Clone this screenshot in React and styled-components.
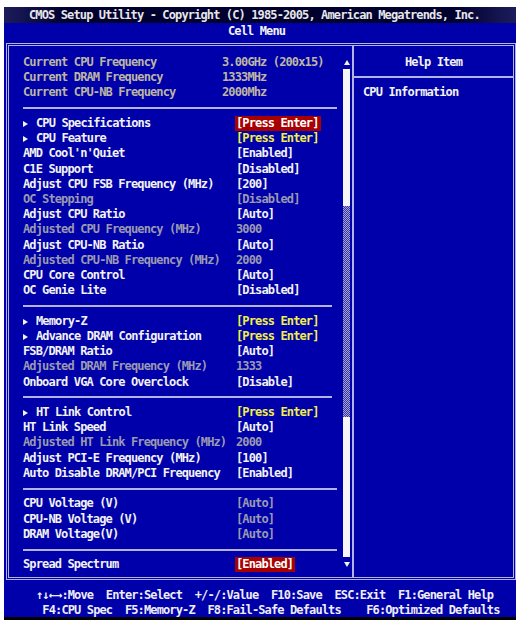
import React from 'react';
import styled, { createGlobalStyle, css } from 'styled-components';

const Global = createGlobalStyle`
  html, body { margin: 0; padding: 0; background: #ffffff; }
  body { font-family: "DejaVu Sans Mono", "Liberation Mono", monospace; }
`;

const LINE = '#b4b4e4';

const Screen = styled.div`
  width: 512px;
  margin: 7px 0 0 4px;
  background: #0000aa;
  border-bottom: 3px solid #000;
  font: bold 12px/15.2px "DejaVu Sans Mono", "Liberation Mono", monospace;
  letter-spacing: -0.875px;
  white-space: pre;
  color: #f2f2f2;
`;

const TitleBar = styled.div`
  height: 16px;
  line-height: 17px;
  padding-left: 25px;
  color: #e6e6e6;
  background: linear-gradient(90deg, #1c1c5c 0%, #00002e 12%, #00002e 88%, #1c1c5c 100%);
`;

const SubTitle = styled.div`
  height: 20px;
  line-height: 17px;
  padding-left: 224px;
  color: #f2f2f2;
`;

const Frame = styled.div`
  margin-left: 2px;
  width: 510px;
  height: 537px;
  box-sizing: border-box;
  border: 3px double ${LINE};
  display: grid;
  grid-template-columns: 343px 2px 159px;
`;

const LeftPanel = styled.div`
  display: flex;
  min-height: 0;
`;

const Rows = styled.div`
  flex: 1;
  padding: 9px 0 0 14px;
`;

const Row = styled.div`
  display: grid;
  grid-template-columns: ${p => (p.$info ? '199px' : '213px')} auto;
  height: 15.22px;
  align-items: center;
`;

const labelColors = {
  normal: '#f2f2f2',
  info: '#bcb6a2',
  dim: '#9a9ab0',
};

const Label = styled.span`
  color: ${p => labelColors[p.$kind || 'normal']};
`;

const valueColors = {
  normal: '#f2f2f2',
  info: '#bcb6a2',
  dim: '#9a9ab0',
  sub: '#f0f048',
  selected: '#ffffff',
};

const Value = styled.span`
  color: ${p => valueColors[p.$kind || 'normal']};
  justify-self: start;
  ${p =>
    p.$kind === 'selected' &&
    css`
      background: #a80000;
      margin-left: -1px;
      padding: 0 2px 0 1px;
      height: 15px;
      line-height: 15px;
    `}
`;

const Arrow = styled.span`
  display: inline-block;
  width: 0;
  height: 0;
  border-left: 5px solid #f2f2f2;
  border-top: 3px solid transparent;
  border-bottom: 3px solid transparent;
  margin-right: 8px;
`;

const SepRow = styled.div`
  height: 15.22px;
  display: flex;
  align-items: center;
  padding-right: ${p => (p.$short ? '11px' : '6px')};
`;

const SepLine = styled.div`
  flex: 1;
  height: 2px;
  background: ${LINE};
`;

const ScrollBar = styled.div`
  width: 7px;
  margin-right: 2px;
  padding-top: 13px;
  display: flex;
  flex-direction: column;
  align-items: center;
`;

const UpTri = styled.div`
  width: 0;
  height: 0;
  margin-top: 1px;
  border-left: 3px solid transparent;
  border-right: 3px solid transparent;
  border-bottom: 5px solid #f2f2f2;
`;

const DownTri = styled.div`
  width: 0;
  height: 0;
  margin-top: 5px;
  border-left: 3px solid transparent;
  border-right: 3px solid transparent;
  border-top: 5px solid #f2f2f2;
`;

const Track = styled.div`
  margin-top: 4px;
  width: 7px;
  height: ${p => p.$h}px;
  ${p =>
    p.$dither
      ? css`
          background: repeating-conic-gradient(#a4a4d4 0% 25%, #3434a8 0% 50%) 0 0 / 2px 2px;
        `
      : css`
          background: #f6f6f6;
        `}
  & + & {
    margin-top: 0;
  }
`;

const Divider = styled.div`
  background: ${LINE};
`;

const RightPanel = styled.div`
  display: flex;
  flex-direction: column;
`;

const HelpTitle = styled.div`
  height: 30px;
  line-height: 32px;
  text-align: center;
  border-bottom: 2px solid ${LINE};
`;

const HelpText = styled.div`
  padding: 7px 0 0 9px;
`;

const Footer = styled.div`
  height: 37px;
  box-sizing: border-box;
  padding: 8px 0 0 32px;
  line-height: 15px;
  color: #eeeef4;
`;

const rows = [
  { label: 'Current CPU Frequency', value: '3.00GHz (200x15)', kind: 'info', vKind: 'info', info: true },
  { label: 'Current DRAM Frequency', value: '1333MHz', kind: 'info', vKind: 'info', info: true },
  { label: 'Current CPU-NB Frequency', value: '2000Mhz', kind: 'info', vKind: 'info', info: true },
  { sep: true },
  { label: 'CPU Specifications', arrow: true, value: '[Press Enter]', vKind: 'selected' },
  { label: 'CPU Feature', arrow: true, value: '[Press Enter]', vKind: 'sub' },
  { label: "AMD Cool'n'Quiet", value: '[Enabled]' },
  { label: 'C1E Support', value: '[Disabled]' },
  { label: 'Adjust CPU FSB Frequency (MHz)', value: '[200]' },
  { label: 'OC Stepping', value: '[Disabled]', kind: 'dim', vKind: 'dim' },
  { label: 'Adjust CPU Ratio', value: '[Auto]' },
  { label: 'Adjusted CPU Frequency (MHz)', value: '3000', kind: 'dim', vKind: 'dim' },
  { label: 'Adjust CPU-NB Ratio', value: '[Auto]' },
  { label: 'Adjusted CPU-NB Frequency (MHz)', value: '2000', kind: 'dim', vKind: 'dim' },
  { label: 'CPU Core Control', value: '[Auto]' },
  { label: 'OC Genie Lite', value: '[Disabled]' },
  { sep: true, short: true },
  { label: 'Memory-Z', arrow: true, value: '[Press Enter]', vKind: 'sub' },
  { label: 'Advance DRAM Configuration', arrow: true, value: '[Press Enter]', vKind: 'sub' },
  { label: 'FSB/DRAM Ratio', value: '[Auto]' },
  { label: 'Adjusted DRAM Frequency (MHz)', value: '1333', kind: 'dim', vKind: 'dim' },
  { label: 'Onboard VGA Core Overclock', value: '[Disable]' },
  { sep: true, short: true },
  { label: 'HT Link Control', arrow: true, value: '[Press Enter]', vKind: 'sub' },
  { label: 'HT Link Speed', value: '[Auto]' },
  { label: 'Adjusted HT Link Frequency (MHz)', value: '2000', kind: 'dim', vKind: 'dim' },
  { label: 'Adjust PCI-E Frequency (MHz)', value: '[100]' },
  { label: 'Auto Disable DRAM/PCI Frequency', value: '[Enabled]' },
  { sep: true },
  { label: 'CPU Voltage (V)', value: '[Auto]', vKind: 'dim' },
  { label: 'CPU-NB Voltage (V)', value: '[Auto]', vKind: 'dim' },
  { label: 'DRAM Voltage(V)', value: '[Auto]', vKind: 'dim' },
  { sep: true },
  { label: 'Spread Spectrum', value: '[Enabled]', vKind: 'selected' },
];

export default function App() {
  return (
    <>
      <Global />
      <Screen>
        <TitleBar>CMOS Setup Utility - Copyright (C) 1985-2005, American Megatrends, Inc.</TitleBar>
        <SubTitle>Cell Menu</SubTitle>
        <Frame>
          <LeftPanel>
            <Rows>
              {rows.map((r, i) =>
                r.sep ? (
                  <SepRow key={i} $short={r.short}>
                    <SepLine />
                  </SepRow>
                ) : (
                  <Row key={i} $info={r.info}>
                    <Label $kind={r.kind}>
                      {r.arrow && <Arrow />}
                      {r.label}
                    </Label>
                    <Value $kind={r.vKind}>{r.value}</Value>
                  </Row>
                )
              )}
            </Rows>
            <ScrollBar>
              <UpTri />
              <Track $h={137} />
              <Track $h={211} $dither />
              <Track $h={140} />
              <DownTri />
            </ScrollBar>
          </LeftPanel>
          <Divider />
          <RightPanel>
            <HelpTitle>Help Item</HelpTitle>
            <HelpText>CPU Information</HelpText>
          </RightPanel>
        </Frame>
        <Footer>
          <div>{'↑↓←→:Move  Enter:Select  +/-/:Value  F10:Save  ESC:Exit  F1:General Help'}</div>
          <div>{' F4:CPU Spec  F5:Memory-Z  F8:Fail-Safe Defaults    F6:Optimized Defaults'}</div>
        </Footer>
      </Screen>
    </>
  );
}
